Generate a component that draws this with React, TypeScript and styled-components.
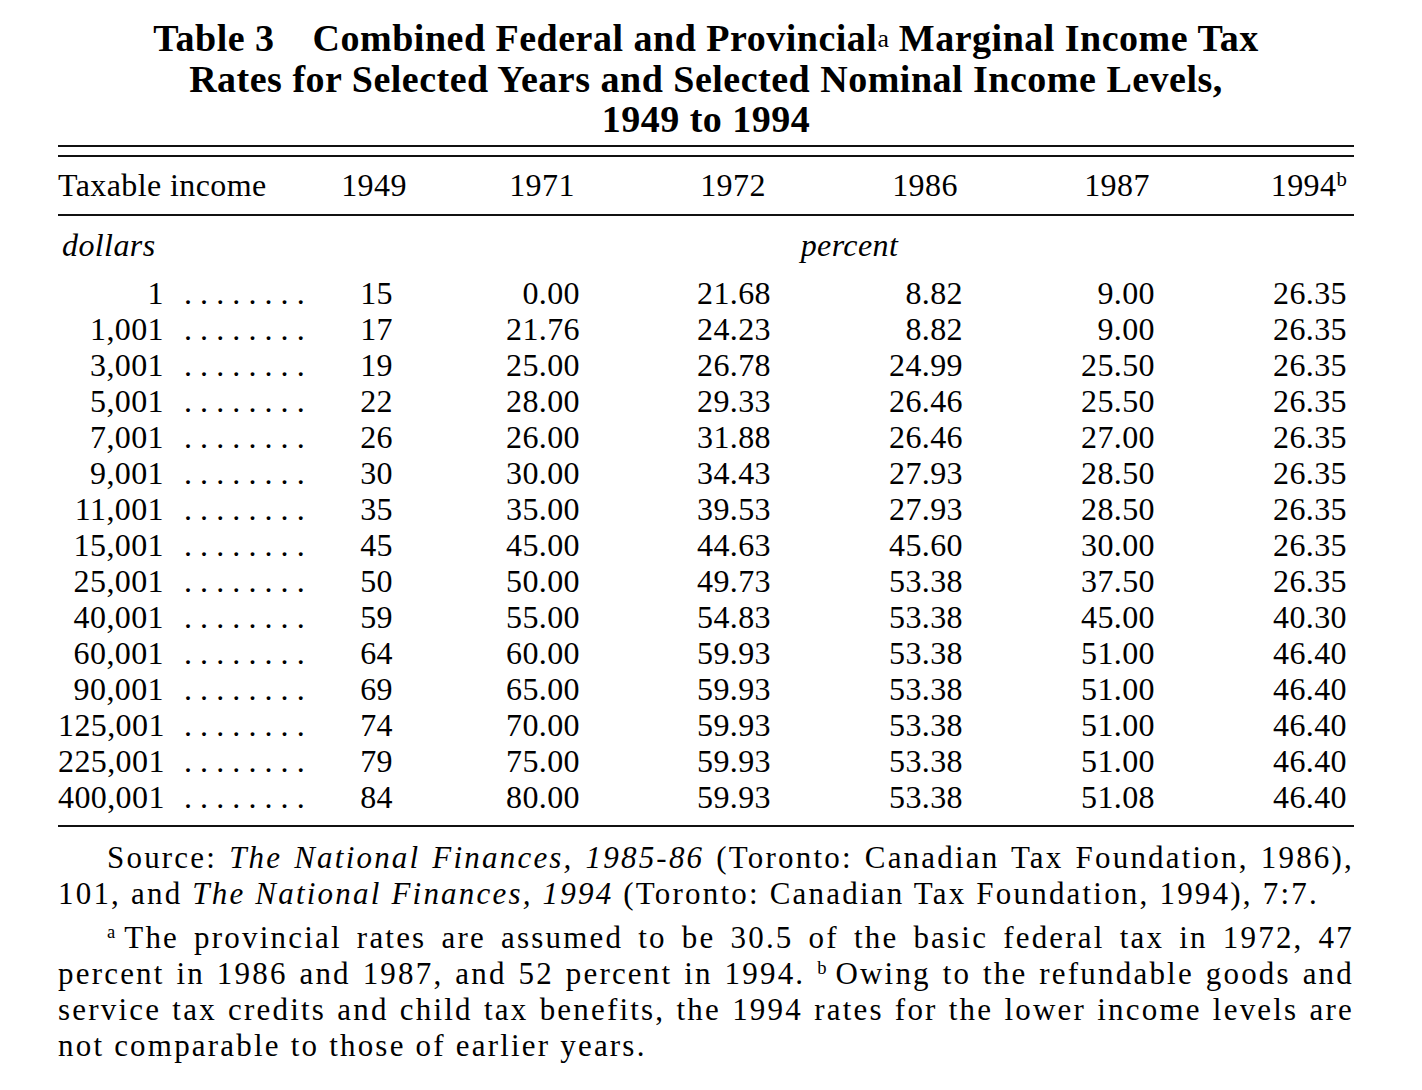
import * as React from 'react'
import styled, { createGlobalStyle } from 'styled-components'

const years = ['1949', '1971', '1972', '1986', '1987', '1994']

// income, then rates for each year
const rows: string[][] = [
  ['1', '15', '0.00', '21.68', '8.82', '9.00', '26.35'],
  ['1,001', '17', '21.76', '24.23', '8.82', '9.00', '26.35'],
  ['3,001', '19', '25.00', '26.78', '24.99', '25.50', '26.35'],
  ['5,001', '22', '28.00', '29.33', '26.46', '25.50', '26.35'],
  ['7,001', '26', '26.00', '31.88', '26.46', '27.00', '26.35'],
  ['9,001', '30', '30.00', '34.43', '27.93', '28.50', '26.35'],
  ['11,001', '35', '35.00', '39.53', '27.93', '28.50', '26.35'],
  ['15,001', '45', '45.00', '44.63', '45.60', '30.00', '26.35'],
  ['25,001', '50', '50.00', '49.73', '53.38', '37.50', '26.35'],
  ['40,001', '59', '55.00', '54.83', '53.38', '45.00', '40.30'],
  ['60,001', '64', '60.00', '59.93', '53.38', '51.00', '46.40'],
  ['90,001', '69', '65.00', '59.93', '53.38', '51.00', '46.40'],
  ['125,001', '74', '70.00', '59.93', '53.38', '51.00', '46.40'],
  ['225,001', '79', '75.00', '59.93', '53.38', '51.00', '46.40'],
  ['400,001', '84', '80.00', '59.93', '53.38', '51.08', '46.40']
]

const GlobalStyle = createGlobalStyle`
  html, body {
    margin: 0;
    padding: 0;
    background: #fff;
  }

  body {
    color: #000;
    font-family: "Liberation Serif", "Times New Roman", serif;
  }
`

export default function App() {
  return (
    <>
      <GlobalStyle />
      <Page>
        <Title>
          <TitleLine>
            Table 3<TitleGap />Combined Federal and Provincial
            <TitleSup>a</TitleSup> Marginal Income Tax
          </TitleLine>
          <TitleLine>Rates for Selected Years and Selected Nominal Income Levels,</TitleLine>
          <TitleLine>1949 to 1994</TitleLine>
        </Title>

        <DoubleRule />

        <HeaderRow>
          <LabelHead>Taxable income</LabelHead>
          {years.map((year, i) => (
            <HeadCell key={year}>
              <HeadBlock narrow={i === 0}>
                {year}
                {year === '1994' ? <Sup>b</Sup> : null}
              </HeadBlock>
            </HeadCell>
          ))}
        </HeaderRow>

        <UnitsRow>
          <Unit>dollars</Unit>
          <PercentUnit>percent</PercentUnit>
        </UnitsRow>

        <Body>
          {rows.map(([income, ...rates]) => (
            <DataRow key={income}>
              <Label>
                <Amount>{income}</Amount>
                <Leader>........</Leader>
              </Label>
              {rates.map((rate, i) => (
                <Num key={i}>{rate}</Num>
              ))}
            </DataRow>
          ))}
        </Body>

        {/* lines are set as in the printed page, each one justified */}
        <Notes>
          <Note>
            <NoteLine indent>
              Source: <em>The National Finances, 1985-86</em> (Toronto: Canadian Tax Foundation, 1986),
            </NoteLine>
            <NoteLine last>
              101, and <em>The National Finances, 1994</em> (Toronto: Canadian Tax Foundation, 1994), 7:7.
            </NoteLine>
          </Note>
          <Note spaced>
            <NoteLine indent>
              <NoteSup>a</NoteSup>The provincial rates are assumed to be 30.5 of the basic federal tax in 1972, 47
            </NoteLine>
            <NoteLine>
              percent in 1986 and 1987, and 52 percent in 1994. <NoteSup>b</NoteSup>Owing to the refundable goods and
            </NoteLine>
            <NoteLine>
              service tax credits and child tax benefits, the 1994 rates for the lower income levels are
            </NoteLine>
            <NoteLine last>not comparable to those of earlier years.</NoteLine>
          </Note>
        </Notes>
      </Page>
    </>
  )
}

const columns = '252px 83px 187px 191px 192px 192px 192px'

const Page = styled.div`
  width: 1296px;
  padding: 18px 0 0 58px;
`

const Title = styled.div`
  text-align: center;
  font-size: 38px;
  font-weight: 700;
  line-height: 40px;
  letter-spacing: 0.5px;
`

const TitleLine = styled.div`
  white-space: nowrap;
`

const TitleGap = styled.span`
  display: inline-block;
  width: 38px;
`

const TitleSup = styled.span`
  font-size: 0.68em;
  font-weight: 400;
  vertical-align: 0.15em;
  letter-spacing: 0;
`

const DoubleRule = styled.div`
  margin-top: 6px;
  height: 8px;
  border-top: 2px solid #111;
  border-bottom: 2px solid #111;
`

const Row = styled.div`
  display: grid;
  grid-template-columns: ${columns};
  align-items: center;
  font-size: 32px;
  letter-spacing: 0.4px;
`

const HeaderRow = styled(Row)`
  height: 57px;
  border-bottom: 2px solid #111;
`

const LabelHead = styled.div`
  white-space: nowrap;
`

const HeadCell = styled.div`
  display: flex;
  justify-content: flex-end;
`

const HeadBlock = styled.div<{ narrow?: boolean }>`
  display: flex;
  justify-content: center;
  width: ${p => (p.narrow ? '38px' : '76px')};
  white-space: nowrap;
`

const Sup = styled.span`
  font-size: 0.65em;
  line-height: 1;
  align-self: flex-start;
  margin-top: 2px;
`

const UnitsRow = styled(Row)`
  height: 59px;
`

const Unit = styled.div`
  font-style: italic;
  padding-left: 4px;
`

const PercentUnit = styled(Unit)`
  grid-column: 2 / -1;
  text-align: center;
  padding-left: 42px;
`

const Body = styled.div`
  padding-bottom: 10px;
  border-bottom: 2px solid #111;
`

const DataRow = styled(Row)`
  line-height: 36px;
`

const Label = styled.div`
  display: flex;
  white-space: nowrap;
`

const Amount = styled.span`
  flex-shrink: 0;
  width: 106px;
  text-align: right;
`

const Leader = styled.span`
  margin-left: 20px;
  letter-spacing: 8.1px;
`

const Num = styled.div`
  justify-self: end;
`

const Notes = styled.div`
  padding-top: 13px;
  font-size: 31px;
  line-height: 36px;
  letter-spacing: 2.2px;
`

const Note = styled.div<{ spaced?: boolean }>`
  margin-top: ${p => (p.spaced ? '8px' : '0')};
`

const NoteLine = styled.div<{ indent?: boolean; last?: boolean }>`
  white-space: nowrap;
  padding-left: ${p => (p.indent ? '49px' : '0')};
  text-align: ${p => (p.last ? 'left' : 'justify')};
  text-align-last: ${p => (p.last ? 'left' : 'justify')};
`

const NoteSup = styled.span`
  font-size: 0.6em;
  line-height: 0;
  vertical-align: 0.55em;
  margin-right: 9px;
  letter-spacing: 0;
`
